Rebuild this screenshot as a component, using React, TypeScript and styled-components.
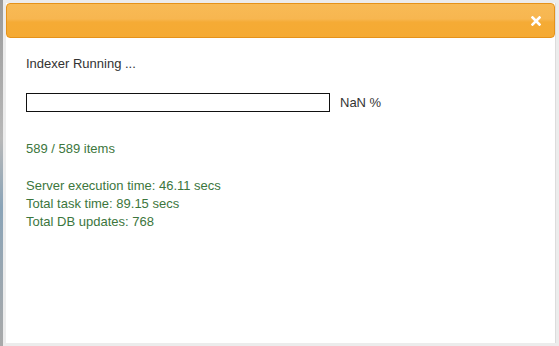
import React from "react";
import styled, { createGlobalStyle } from "styled-components";

const Global = createGlobalStyle`
  html, body { margin: 0; padding: 0; }
  body {
    background: #ececec;
    font-family: "Liberation Sans", Arial, sans-serif;
    width: 559px;
    height: 346px;
    overflow: hidden;
  }
`;

const Page = styled.div`
  display: flex;
  width: 559px;
  height: 346px;
`;

const PageEdge = styled.div`
  width: 3px;
  flex: none;
  background: linear-gradient(#9a9a9a, #b8b8b8 40%, #8aa4b8 60%, #a9a9a9);
`;

const Frame = styled.div`
  flex: 1;
  padding: 3px;
  display: flex;
`;

const Dialog = styled.div`
  width: 549px;
  height: 340px;
  background: #fff;
  display: flex;
  flex-direction: column;
  box-shadow: 1px 0 0 #dcdcdc;
`;

const Header = styled.div`
  height: 33px;
  flex: none;
  border: 1px solid #e5921a;
  border-radius: 4px;
  background: linear-gradient(#f8ba55 0%, #f7b650 45%, #f5ab35 55%, #f5aa33 100%);
  display: flex;
  align-items: center;
  justify-content: flex-end;
  padding-right: 13px;
`;

const Close = styled.button`
  border: none;
  background: none;
  padding: 0;
  margin: 0;
  width: 10px;
  height: 10px;
  display: flex;
  cursor: pointer;
`;

const Body = styled.div`
  padding: 17px 20px 0 20px;
  font-size: 13px;
  line-height: 18px;
  color: #333;
`;

const Status = styled.div`
  color: #333;
`;

const ProgressRow = styled.div`
  display: flex;
  align-items: center;
  margin-top: 20px;
  gap: 10px;
`;

const Bar = styled.div`
  width: 302px;
  height: 17px;
  border: 1px solid #111;
  background: #fff;
`;

const Percent = styled.span`
  color: #333;
`;

const Line = styled.div<{ $gap?: number }>`
  color: #3c763d;
  margin-top: ${(p) => p.$gap ?? 0}px;
`;

export default function App() {
  return (
    <>
      <Global />
      <Page>
        <PageEdge />
        <Frame>
          <Dialog>
            <Header>
              <Close aria-label="close">
                <svg width="10" height="10" viewBox="0 0 10 10">
                  <path d="M1.5 1.5 L8.5 8.5 M8.5 1.5 L1.5 8.5" stroke="#fff" strokeWidth="2.6" strokeLinecap="square" />
                </svg>
              </Close>
            </Header>
            <Body>
              <Status>Indexer Running ...</Status>
              <ProgressRow>
                <Bar />
                <Percent>NaN %</Percent>
              </ProgressRow>
              <Line $gap={28}>589 / 589 items</Line>
              <Line $gap={19}>Server execution time: 46.11 secs</Line>
              <Line>Total task time: 89.15 secs</Line>
              <Line>Total DB updates: 768</Line>
            </Body>
          </Dialog>
        </Frame>
      </Page>
    </>
  );
}
